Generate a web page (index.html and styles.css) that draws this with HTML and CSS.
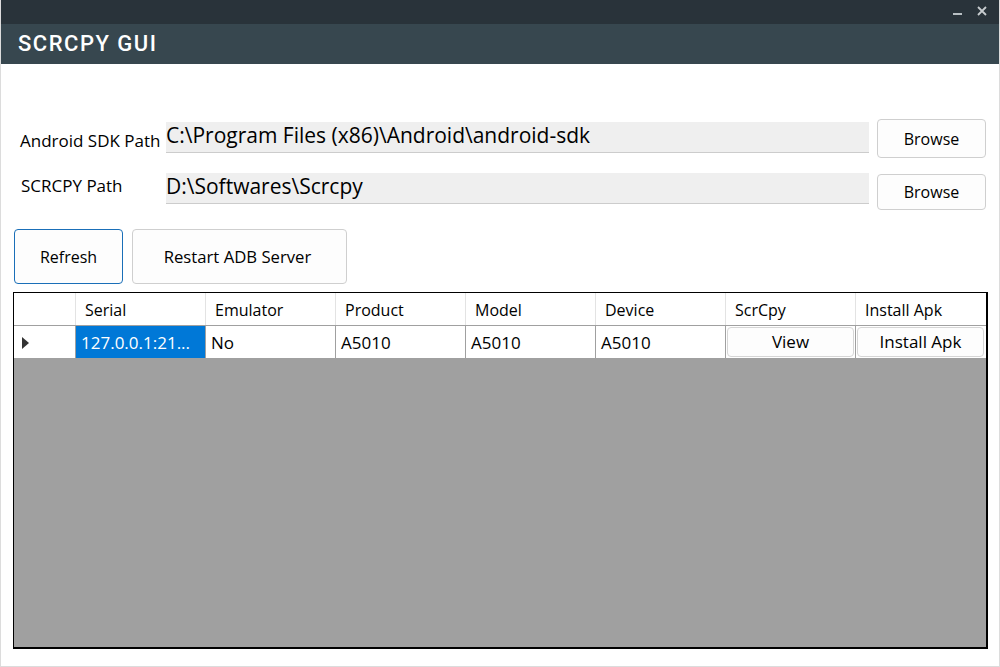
FILE: index.html
```
<!DOCTYPE html>
<html>
<head>
<meta charset="utf-8">
<link rel="stylesheet" href="styles.css">
</head>
<body>
<div class="window">
  <div class="topstrip">
    <span class="ctl min"></span>
    <svg class="ctl close" width="10" height="10" viewBox="0 0 10 10"><path d="M1 1L9 9M9 1L1 9" stroke="#c8cdd0" stroke-width="1.8"/></svg>
  </div>
  <div class="titlebar">SCRCPY GUI</div>
  <div class="content">
    <div class="formrow row1">
      <label class="lbl">Android SDK Path</label>
      <div class="pathbox">C:\Program Files (x86)\Android\android-sdk</div>
      <button class="btn browse b1">Browse</button>
    </div>
    <div class="formrow row2">
      <label class="lbl lbl2">SCRCPY Path</label>
      <div class="pathbox">D:\Softwares\Scrcpy</div>
      <button class="btn browse b2">Browse</button>
    </div>
    <div class="actions">
      <button class="btn action refresh">Refresh</button>
      <button class="btn action restart">Restart ADB Server</button>
    </div>
    <div class="grid">
      <div class="gridrow header">
        <div class="cell rowhead"></div>
        <div class="cell">Serial</div>
        <div class="cell">Emulator</div>
        <div class="cell">Product</div>
        <div class="cell">Model</div>
        <div class="cell">Device</div>
        <div class="cell">ScrCpy</div>
        <div class="cell">Install Apk</div>
      </div>
      <div class="gridrow data">
        <div class="cell rowhead"><span class="arrow"></span></div>
        <div class="cell selected">127.0.0.1:21...</div>
        <div class="cell">No</div>
        <div class="cell">A5010</div>
        <div class="cell">A5010</div>
        <div class="cell">A5010</div>
        <div class="cell btncell"><button class="btn cellbtn">View</button></div>
        <div class="cell btncell"><button class="btn cellbtn">Install Apk</button></div>
      </div>
    </div>
  </div>
</div>
</body>
</html>
```
FILE: styles.css
```
* { box-sizing: border-box; }
html, body { margin: 0; padding: 0; background: #fff; }
body { font-family: "Open Sans", "Noto Sans", sans-serif; color: #000; }
.window {
  width: 1000px; height: 667px;
  border-left: 1px solid #dcdcdc; border-right: 1px solid #dcdcdc; border-bottom: 1px solid #dcdcdc;
  display: flex; flex-direction: column;
  overflow: hidden;
}
.topstrip {
  height: 24px; background: #29333a; position: relative; flex: none;
  margin-left: -1px; margin-right: -1px;
}
.ctl { position: absolute; }
.min { left: 953px; top: 13px; width: 9px; height: 2px; background: #b8bfc3; }
.close { left: 977px; top: 6px; }
.titlebar {
  height: 40px; background: #37474f; color: #fff; flex: none;
  font-family: Roboto, sans-serif; font-size: 22px; font-weight: 500;
  padding-left: 18px; line-height: 40px; letter-spacing: 1.5px;
  margin-left: -1px; margin-right: -1px;
}
.content { padding: 55px 12px 0 12px; flex: 1; display: flex; flex-direction: column; }
.formrow { display: flex; align-items: flex-start; }
.lbl { width: 153px; font-size: 17px; padding-left: 7px; flex: none; white-space: nowrap; }
.row1 .lbl { margin-top: 10px; }
.row2 { margin-top: 15px; }
.row2 .lbl { margin-top: 1px; padding-left: 8px; }
.pathbox {
  width: 703px; height: 31px; background: #efefef; border-bottom: 1px solid #cccccc;
  font-size: 21px; line-height: 26px; padding-left: 0px; flex: none; white-space: nowrap;
}
.row1 .pathbox { margin-top: 3px; }
.btn {
  font-family: "Open Sans", "Noto Sans", sans-serif; color: #000;
  background: #fdfdfd; border: 1px solid #cfcfcf; border-radius: 4px; padding: 0;
}
.browse { width: 109px; margin-left: 8px; font-size: 16px; flex: none; }
.b1 { height: 39px; }
.b2 { height: 36px; margin-top: 1px; }
.actions { display: flex; gap: 9px; margin-top: 19px; padding-left: 1px; }
.action { height: 55px; font-size: 16px; }
.refresh { width: 109px; border-color: #1a6fb8; }
.restart { width: 215px; font-size: 16.7px; padding-right: 4px; }
.grid {
  margin-top: 8px; width: 975px; height: 357px; border: 1px solid #000; border-right-width: 2px; border-bottom-width: 2px;
  background: #a0a0a0;
}
.gridrow { display: flex; background: #fff; }
.cell {
  width: 130px; flex: none; border-left: 1px solid #e3e3e3; font-size: 16px;
  padding-left: 9px; white-space: nowrap; overflow: hidden;
}
.cell.rowhead { width: 61px; border-left: none; padding-left: 0; }
.header { height: 33px; border-bottom: 1px solid #a0a0a0; }
.header .cell { line-height: 35px; }
.data { height: 33px; border-bottom: 1px solid #a0a0a0; }
.data .cell { line-height: 33px; font-size: 17px; border-left-color: #a0a0a0; padding-left: 5px; }
.data .cell.rowhead { border-left: none; position: relative; }
.arrow {
  position: absolute; left: 8px; top: 11px; width: 0; height: 0;
  border-top: 6px solid transparent; border-bottom: 6px solid transparent; border-left: 7px solid #333;
}
.selected { background: #0078d7; color: #fff; }
.data .btncell { padding: 1px 0 1px 1px; }
.cellbtn { width: 127px; height: 30px; font-size: 17px; line-height: 28px; border-color: #d6d6d6; display: block; }
```
